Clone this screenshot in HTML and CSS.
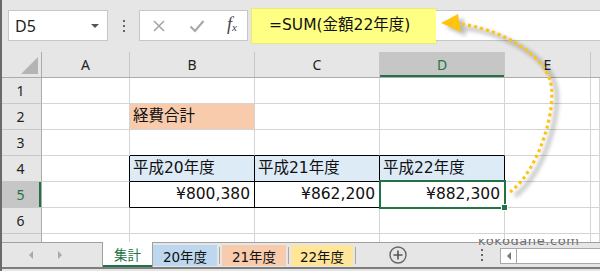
FILE: index.html
```html
<!DOCTYPE html>
<html lang="ja">
<head>
<meta charset="utf-8">
<link rel="stylesheet" href="styles.css">
</head>
<body>
<div class="app">
  <div class="fbar">
    <div class="namebox"><span class="nb-text">D5</span><span class="nb-arrow"></span></div>
    <div class="vdots"><i></i><i></i><i></i></div>
    <div class="fxbox">
      <svg class="ico" width="14" height="14" viewBox="0 0 14 14"><path d="M2 2 L12 12 M12 2 L2 12" stroke="#a6a6a6" stroke-width="1.6" fill="none"/></svg>
      <svg class="ico" width="16" height="14" viewBox="0 0 16 14"><path d="M1.5 7.5 L6 12 L14.5 2" stroke="#a6a6a6" stroke-width="2" fill="none"/></svg>
      <span class="fx">f<sub>x</sub></span>
    </div>
    <div class="formula">=SUM(金額22年度)</div>
    <div class="finput"></div>
  </div>

  <div class="sheet">
    <div class="c corner"><span class="tri"></span></div>
    <div class="c ch">A</div><div class="c ch">B</div><div class="c ch">C</div><div class="c ch selcol">D</div><div class="c ch">E</div><div class="c ch last"></div>

    <div class="c rh">1</div><div class="c"></div><div class="c"></div><div class="c"></div><div class="c"></div><div class="c"></div><div class="c"></div>

    <div class="c rh">2</div><div class="c"></div><div class="c orange">経費合計</div><div class="c"></div><div class="c"></div><div class="c"></div><div class="c"></div>

    <div class="c rh">3</div><div class="c"></div><div class="c bb"></div><div class="c bb"></div><div class="c bb"></div><div class="c"></div><div class="c"></div>

    <div class="c rh">4</div><div class="c brk"></div><div class="c box blue">平成20年度</div><div class="c box blue">平成21年度</div><div class="c box blue">平成22年度</div><div class="c"></div><div class="c"></div>

    <div class="c rh selrow">5</div><div class="c brk"></div><div class="c box num">¥800,380</div><div class="c box num">¥862,200</div><div class="c box num active">¥882,300<span class="handle"></span></div><div class="c"></div><div class="c"></div>

    <div class="c rh">6</div><div class="c"></div><div class="c"></div><div class="c"></div><div class="c"></div><div class="c"></div><div class="c"></div>

    <div class="c rh r7">7</div><div class="c"></div><div class="c"></div><div class="c"></div><div class="c"></div><div class="c"></div><div class="c"></div>
  </div>

  <div class="tabs">
    <div class="tabrow">
      <div class="nav">
        <span class="tri-l"></span>
        <span class="tri-r"></span>
      </div>
      <div class="tab act">集計</div>
      <div class="tab t20">20年度</div>
      <span class="sep"></span>
      <div class="tab t21">21年度</div>
      <span class="sep"></span>
      <div class="tab t22">22年度</div>
      <span class="sep"></span>
      <div class="plus">
        <svg width="18" height="18" viewBox="0 0 18 18"><circle cx="9" cy="9" r="8" fill="none" stroke="#666" stroke-width="1.4"/><path d="M9 4.5 V13.5 M4.5 9 H13.5" stroke="#555" stroke-width="1.6"/></svg>
      </div>
      <div class="vdots2"><i></i><i></i><i></i></div>
      <div class="hscroll"><span class="hbtn"><span class="tri-s"></span></span></div>
    </div>
  </div>

  <div class="watermark"><span>kokodane.com</span></div>

  <svg class="arrow" width="600" height="271" viewBox="0 0 600 271">
    <g class="shadow">
      <path d="M510 192 C540 170, 558 104, 550 80 C540 50, 495 28, 460 24" fill="none" stroke="#000" stroke-width="3.5"/>
      <polygon points="441,23 458,14 461,32" fill="#000"/>
    </g>
    <path d="M510 192 C540 170, 558 104, 550 80 C540 50, 495 28, 460 24" fill="none" stroke="#ffc310" stroke-width="3.2" stroke-dasharray="3 3.2"/>
    <polygon points="441,23 458,14 461,32" fill="#ffc310"/>
  </svg>
</div>
</body>
</html>
```

FILE: styles.css
```css
* { box-sizing: border-box; }
html, body { margin: 0; padding: 0; }
body { background: #e6e6e6; }

.app {
  position: relative;
  width: 600px;
  height: 271px;
  overflow: hidden;
  background: #e6e6e6;
  font-family: "Noto Sans", "Open Sans", sans-serif;
  color: #222;
}
.app::before {
  content: "";
  position: absolute;
  left: 0; top: 0; bottom: 0;
  width: 2px;
  background: #6a6a6a;
  z-index: 5;
}

/* formula bar */
.fbar {
  height: 52px;
  display: flex;
  align-items: flex-start;
  padding: 10px 0 0 8px;
}
.namebox {
  width: 100px;
  height: 31px;
  background: #fff;
  border: 1px solid #c6c6c6;
  display: flex;
  align-items: center;
  justify-content: space-between;
  padding: 0 8px 0 6px;
}
.nb-text { font-size: 16px; color: #222; }
.nb-arrow {
  width: 0; height: 0;
  border-left: 4px solid transparent;
  border-right: 4px solid transparent;
  border-top: 4px solid #555;
}
.vdots {
  width: 31px;
  height: 31px;
  display: flex;
  flex-direction: column;
  align-items: center;
  justify-content: center;
  gap: 3px;
}
.vdots i, .vdots2 i {
  display: block;
  width: 2px; height: 2px;
  background: #666;
}
.fxbox {
  width: 109px;
  height: 31px;
  background: #fff;
  border: 1px solid #c6c6c6;
  display: flex;
  align-items: center;
  padding: 0 10px 0 12px;
  justify-content: space-between;
}
.fx {
  font-family: "Liberation Serif", serif;
  font-style: italic;
  font-size: 18px;
  line-height: 18px;
  color: #444;
}
.fx sub { font-size: 11px; vertical-align: -1px; }
.formula {
  width: 184px;
  height: 34px;
  margin: -1px 0 0 4px;
  background: #ffff84;
  box-shadow: 0 0 1px 1px #e9e984;
  font-family: "DejaVu Sans", "Noto Sans CJK JP", sans-serif;
  font-size: 15.5px;
  line-height: 33px;
  padding-left: 17px;
  color: #111;
  white-space: nowrap;
}
.finput {
  flex: 1;
  height: 31px;
  background: #fff;
  border-top: 1px solid #c6c6c6;
  border-bottom: 1px solid #c6c6c6;
}

/* sheet grid */
.sheet {
  height: 190px;
  overflow: hidden;
  display: grid;
  grid-template-columns: 42px 88px 125px 125px 125px 86px 1fr;
  grid-auto-rows: 26px;
  background: #fff;
}
.c {
  border-right: 1px solid #d4d4d4;
  border-bottom: 1px solid #d4d4d4;
  background: #fff;
  font-family: "DejaVu Sans", "Noto Sans CJK JP", sans-serif;
  font-size: 15.5px;
  line-height: 25px;
  padding: 0 3px;
  white-space: nowrap;
  color: #111;
}
.corner {
  background: #e6e6e6;
  border-right: 1px solid #ababab;
  border-bottom: 1px solid #ababab;
  position: relative;
}
.tri {
  position: absolute;
  right: 3px;
  bottom: 3px;
  width: 0; height: 0;
  border-left: 17px solid transparent;
  border-bottom: 17px solid #b4b4b4;
}
.ch {
  background: #e6e6e6;
  border-right: 1px solid #c8c8c8;
  border-bottom: 1px solid #ababab;
  font-family: "Noto Sans", sans-serif;
  font-size: 14px;
  text-align: center;
  color: #222;
}
.ch.last { border-right: none; }
.selcol {
  background: #c6c6c6;
  color: #217346;
  box-shadow: inset 0 -2px 0 #217346;
}
.rh {
  background: #e6e6e6;
  border-right: 1px solid #ababab;
  border-bottom: 1px solid #c8c8c8;
  font-family: "Noto Sans", sans-serif;
  font-size: 14px;
  text-align: center;
  color: #222;
}
.selrow {
  background: #c6c6c6;
  color: #217346;
  box-shadow: inset -2px 0 0 #217346;
}
.orange { background: #f8cbad; }
.blue { background: #ddebf7; }
.bb { border-bottom-color: #000; }
.brk { border-right-color: #000; }
.box { border-right-color: #000; border-bottom-color: #000; }
.num { text-align: right; padding-right: 4px; }
.active { position: relative; }
.active::after {
  content: "";
  position: absolute;
  left: -1px; top: -2px; right: -2px; bottom: -2px;
  border: 2px solid #217346;
}
.handle {
  position: absolute;
  right: -4px;
  bottom: -4px;
  width: 7px; height: 7px;
  background: #217346;
  border: 1px solid #fff;
  z-index: 2;
}

/* tabs */
.tabs {
  height: 29px;
  border-top: 1px solid #a0a0a0;
  background: #e6e6e6;
}
.tabrow {
  height: 26px;
  border-bottom: 2px solid #7e7e7e;
  display: flex;
  align-items: stretch;
}
.nav {
  width: 102px;
  display: flex;
  align-items: center;
  padding-left: 29px;
  gap: 25px;
}
.tri-l {
  width: 0; height: 0;
  border-top: 4px solid transparent;
  border-bottom: 4px solid transparent;
  border-right: 4px solid #a8a8a8;
}
.tri-r {
  width: 0; height: 0;
  border-top: 4px solid transparent;
  border-bottom: 4px solid transparent;
  border-left: 4px solid #a8a8a8;
}
.tab {
  font-family: "DejaVu Sans", "Noto Sans CJK JP", sans-serif;
  font-size: 13.5px;
  display: flex;
  align-items: center;
  justify-content: center;
  margin: 2px 0 1px;
  color: #111;
}
.tab.act {
  width: 51px;
  margin: -1px 0 0;
  background: #fff;
  border-left: 1px solid #a0a0a0;
  border-right: 1px solid #a0a0a0;
  color: #217346;
  box-shadow: inset 0 -2px 0 #217346;
  padding-bottom: 1px;
}
.t20 { width: 64px; background: #bdd7ee; }
.t21 { width: 64px; background: #f8cbad; }
.t22 { width: 62px; background: #ffe699; }
.sep {
  width: 1px;
  margin: 4px 2px 3px;
  background: #a8a8a8;
}
.plus {
  width: 64px;
  display: flex;
  align-items: center;
  justify-content: center;
  padding-left: 16px;
}
.vdots2 {
  width: 36px;
  display: flex;
  flex-direction: column;
  align-items: center;
  justify-content: center;
  gap: 3px;
  margin-left: 42px;
}
.hscroll {
  flex: 1;
  margin: 5px 0 3px 0;
  background: #fff;
  border: 1px solid #a8a8a8;
  border-right: none;
}
.hbtn {
  display: flex;
  width: 16px;
  height: 100%;
  border-right: 1px solid #a8a8a8;
  align-items: center;
  justify-content: center;
}
.tri-s {
  width: 0; height: 0;
  border-top: 4px solid transparent;
  border-bottom: 4px solid transparent;
  border-right: 4px solid #777;
}

/* watermark */
.watermark {
  position: absolute;
  left: 478px;
  top: 239px;
  height: 9px;
  overflow: hidden;
}
.watermark span {
  display: block;
  margin-top: -6px;
  font-family: "DejaVu Sans", sans-serif;
  font-size: 13px;
  line-height: 15px;
  letter-spacing: 0.6px;
  color: #6a6a6a;
  text-shadow: 0 0 1px #fff;
}

/* arrow */
.arrow {
  position: absolute;
  left: 0; top: 0;
  pointer-events: none;
}
.shadow {
  opacity: 0.28;
  transform: translate(5px, 4px);
  filter: blur(2px);
}
```
